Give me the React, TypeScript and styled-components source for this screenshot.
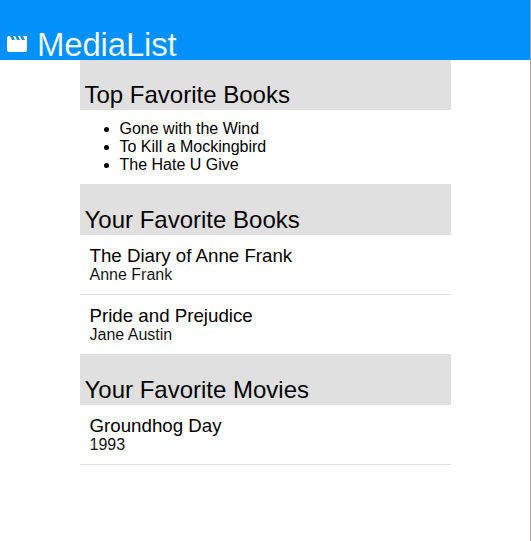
import React from "react";
import styled, { createGlobalStyle } from "styled-components";

const GlobalStyle = createGlobalStyle`
  * { box-sizing: border-box; }
  body {
    margin: 0;
    background: #fff;
    color: #000;
    font-family: "Liberation Sans", Arial, sans-serif;
  }
`;

const Page = styled.div`
  height: 541px;
  border-right: 1px solid #a5a294;
  overflow: hidden;
`;

const Header = styled.header`
  display: flex;
  height: 60px;
  padding: 28px 5px 0;
  background: #0290fb;
  color: #fff;
`;

const MovieIcon = styled.svg`
  width: 24px;
  height: 24px;
  margin-top: 4px;
  fill: currentColor;
`;

const Brand = styled.h1`
  margin: 0 0 0 8px;
  font-size: 33px;
  font-weight: 400;
  line-height: 34px;
  letter-spacing: -0.2px;
  -webkit-text-stroke: 0.2px #0290fb;
`;

const Content = styled.main`
  width: 371px;
  margin: 0 auto 0 80px;
`;

const SectionTitle = styled.h2`
  height: 50px;
  margin: 0;
  padding: 21px 4.5px 0;
  background: #e0e0e0;
  font-size: 24px;
  font-weight: 400;
  line-height: 28px;
  white-space: nowrap;
`;

const TopList = styled.ul`
  height: 75px;
  margin: 0;
  padding: 10px 0 0 39.5px;
  border-bottom: 1px solid #e0e0e0;
  font-size: 16px;
  line-height: 18px;
`;

const Entry = styled.article`
  height: 60px;
  padding: 10px 9.5px 0;
  border-bottom: 1px solid #e0e0e0;
`;

const EntryTitle = styled.h3`
  margin: 0;
  font-size: 18.72px;
  font-weight: 400;
  line-height: 21px;
`;

const EntryDetail = styled.p`
  margin: 0;
  font-size: 16px;
  line-height: 18px;
  -webkit-text-stroke: 0.1px #fff;
`;

const topBooks = ["Gone with the Wind", "To Kill a Mockingbird", "The Hate U Give"];

const sections = [
  {
    title: "Your Favorite Books",
    entries: [
      { title: "The Diary of Anne Frank", detail: "Anne Frank" },
      { title: "Pride and Prejudice", detail: "Jane Austin" },
    ],
  },
  {
    title: "Your Favorite Movies",
    entries: [{ title: "Groundhog Day", detail: "1993" }],
  },
];

export default function App() {
  return (
    <>
      <GlobalStyle />
      <Page>
        <Header>
          <MovieIcon viewBox="0 0 24 24" aria-hidden="true">
            <path d="M18 4l2 4h-3l-2-4h-2l2 4h-3l-2-4H8l2 4H7L5 4H4c-1.1 0-1.99.9-1.99 2L2 18c0 1.1.9 2 2 2h16c1.1 0 2-.9 2-2V4h-4z" />
          </MovieIcon>
          <Brand>MediaList</Brand>
        </Header>
        <Content>
          <section>
            <SectionTitle>Top Favorite Books</SectionTitle>
            <TopList>
              {topBooks.map((book) => (
                <li key={book}>{book}</li>
              ))}
            </TopList>
          </section>
          {sections.map((section) => (
            <section key={section.title}>
              <SectionTitle>{section.title}</SectionTitle>
              {section.entries.map((entry) => (
                <Entry key={entry.title}>
                  <EntryTitle>{entry.title}</EntryTitle>
                  <EntryDetail>{entry.detail}</EntryDetail>
                </Entry>
              ))}
            </section>
          ))}
        </Content>
      </Page>
    </>
  );
}
